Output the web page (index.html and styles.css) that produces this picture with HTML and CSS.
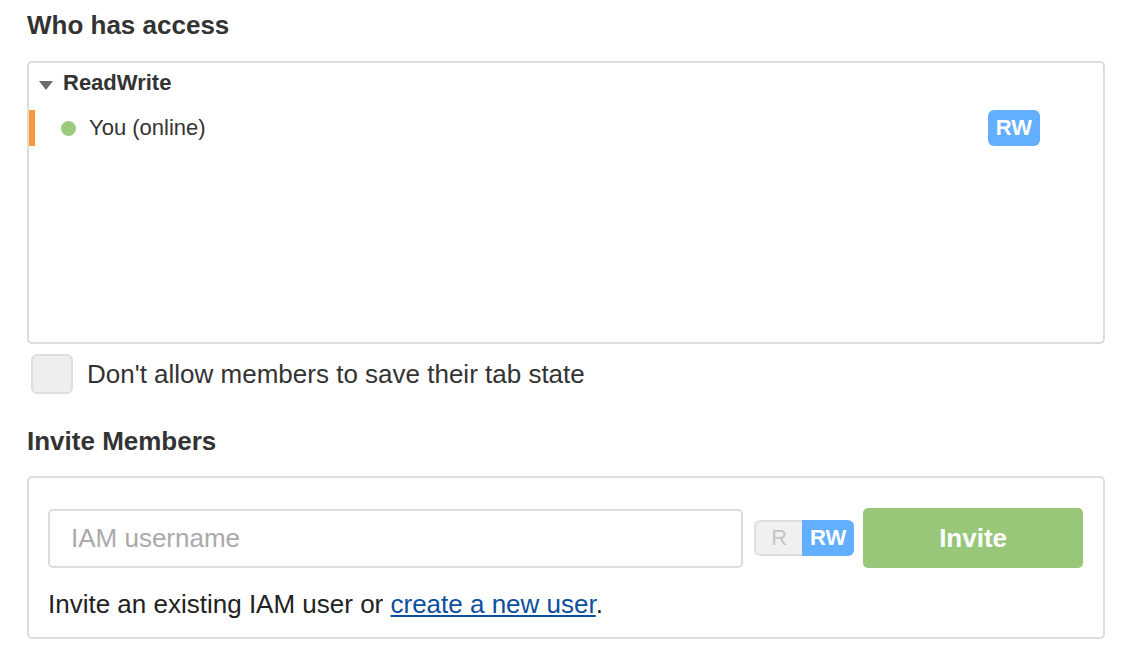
FILE: index.html
```html
<!DOCTYPE html>
<html>
<head>
<meta charset="utf-8">
<link rel="stylesheet" href="styles.css">
</head>
<body>
<div class="page">
  <h2 class="heading">Who has access</h2>
  <div class="panel access">
    <div class="group-title"><span class="caret"></span>ReadWrite</div>
    <div class="member">
      <span class="dot"></span>
      <span class="name">You (online)</span>
      <span class="badge">RW</span>
    </div>
  </div>
  <label class="check-row"><span class="checkbox"></span>Don't allow members to save their tab state</label>
  <h2 class="heading invite-heading">Invite Members</h2>
  <div class="panel invite">
    <div class="invite-row">
      <input class="username" type="text" placeholder="IAM username">
      <div class="toggle"><span class="t-r">R</span><span class="t-rw">RW</span></div>
      <button class="invite-btn">Invite</button>
    </div>
    <p class="hint">Invite an existing IAM user or <a href="#">create a new user</a>.</p>
  </div>
</div>
</body>
</html>
```
FILE: styles.css
```css
html, body { margin: 0; padding: 0; background: #fff; }
body { font-family: "Liberation Sans", Arial, sans-serif; color: #333; }
.page { padding: 0 27px 0 27px; }
.heading { margin: 0; font-size: 26px; font-weight: bold; color: #333; line-height: 30px; padding-top: 10px; }
.panel { border: 2px solid #dcdcdc; border-radius: 5px; box-sizing: border-box; }
.access { margin-top: 21px; height: 283px; padding-top: 7px; }
.group-title { display: flex; align-items: center; font-size: 22px; font-weight: bold; color: #333; height: 26px; line-height: 26px; padding-left: 10px; }
.caret { width: 0; height: 0; border-left: 7px solid transparent; border-right: 7px solid transparent; border-top: 9px solid #6b6b6b; margin-right: 10px; margin-top: 4px; }
.member { display: flex; align-items: center; height: 36px; margin-top: 14px; border-left: 6px solid #fd9a38; padding-left: 26px; padding-right: 63px; }
.dot { width: 15px; height: 15px; border-radius: 50%; background: #9ccb7e; margin-right: 13px; }
.name { font-size: 22px; color: #333; flex: 1; }
.badge { background: #62aeff; color: #fff; font-weight: bold; font-size: 22px; border-radius: 6px; width: 52px; height: 36px; display: flex; align-items: center; justify-content: center; }
.check-row { display: flex; align-items: center; margin-top: 10px; padding-left: 4px; font-size: 26px; line-height: 40px; height: 40px; color: #333; }
.checkbox { border: 2px solid #dedede; background: #eeeeee; border-radius: 6px; margin-right: 14px; width: 38px; height: 36px; }
.invite-heading { padding-top: 32px; }
.invite { margin-top: 20px; padding: 30px 20px 0 19px; height: 163px; }
.invite-row { display: flex; align-items: center; }
.username { width: 696px; height: 59px; box-sizing: border-box; border: 2px solid #dcdcdc; border-radius: 5px; font-family: "Liberation Sans", Arial, sans-serif; font-size: 26px; padding: 0 21px; color: #333; outline: none; }
.username::placeholder { color: #aaa; }
.toggle { display: flex; height: 36px; margin-left: 11px; border-radius: 6px; overflow: hidden; }
.t-r { width: 48px; background: #f0f0f0; border: 2px solid #dedede; border-right: none; border-radius: 6px 0 0 6px; color: #c4c4c4; font-size: 22px; display: flex; align-items: center; justify-content: center; box-sizing: border-box; }
.t-rw { width: 52px; background: #62aeff; color: #fff; font-weight: bold; font-size: 22px; display: flex; align-items: center; justify-content: center; }
.invite-btn { margin-left: 9px; width: 220px; height: 60px; background: #98c77a; border: none; border-radius: 5px; color: #fff; font-family: "Liberation Sans", Arial, sans-serif; font-weight: bold; font-size: 26px; }
.hint { margin: 21px 0 0 0; font-size: 26px; line-height: 30px; color: #222; }
.hint a { color: #0b4f9e; text-decoration: underline; }
```
